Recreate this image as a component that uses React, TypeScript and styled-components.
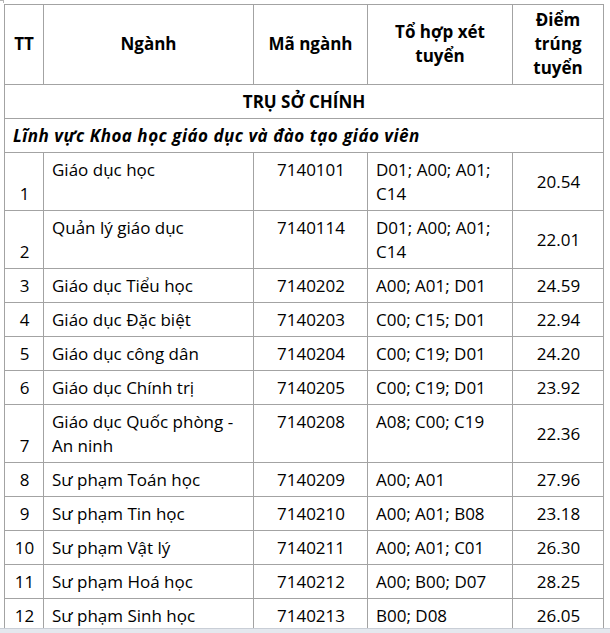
import React from "react";
import styled, { createGlobalStyle } from "styled-components";

const GlobalStyle = createGlobalStyle`
  html, body {
    margin: 0;
    padding: 0;
    background: #ffffff;
  }
  body {
    font-family: "Open Sans", "Noto Sans", "DejaVu Sans", sans-serif;
    color: #000000;
  }
`;

const Page = styled.div`
  position: relative;
  padding: 4px 0 0 4px;
  &::before {
    content: "";
    position: absolute;
    left: 0;
    top: 0;
    width: 3px;
    height: 2px;
    border-top: 1px solid #b5b5b5;
    border-right: 1px solid #b5b5b5;
  }
`;

const Table = styled.table`
  border-collapse: collapse;
  table-layout: fixed;
  width: 600px;
  font-size: 17px;
  line-height: 24px;
  border: 1px solid #a3a3a3;
`;

const HeadCell = styled.th`
  border: 1px solid #a3a3a3;
  padding: 3px 6px 4px 6px;
  font-weight: 700;
  text-align: center;
  vertical-align: middle;
`;

type CellProps = {
  $align?: "left" | "center";
  $valign?: "top" | "middle" | "bottom";
};

const Cell = styled.td<CellProps>`
  border: 1px solid #a3a3a3;
  padding: 5px 7px 4px 8px;
  text-align: ${(p) => p.$align ?? "left"};
  vertical-align: ${(p) => p.$valign ?? "top"};
`;

const CampusCell = styled.td`
  border: 1px solid #a3a3a3;
  padding: 5px 8px 4px 8px;
  text-align: center;
  font-weight: 700;
`;

const FieldCell = styled.td`
  border: 1px solid #a3a3a3;
  padding: 5px 8px 4px 8px;
  text-align: left;
  font-weight: 700;
  font-style: italic;
  letter-spacing: 0.5px;
`;

const BottomBand = styled.div`
  position: fixed;
  left: 0;
  right: 0;
  bottom: 0;
  height: 4px;
  background: #e4e8ee;
  border-top: 1px solid #c9ced6;
`;

type Row = {
  tt: string;
  name: string;
  code: string;
  combo: string;
  score: string;
};

const rows: Row[] = [
  { tt: "1", name: "Giáo dục học", code: "7140101", combo: "D01; A00; A01; C14", score: "20.54" },
  { tt: "2", name: "Quản lý giáo dục", code: "7140114", combo: "D01; A00; A01; C14", score: "22.01" },
  { tt: "3", name: "Giáo dục Tiểu học", code: "7140202", combo: "A00; A01; D01", score: "24.59" },
  { tt: "4", name: "Giáo dục Đặc biệt", code: "7140203", combo: "C00; C15; D01", score: "22.94" },
  { tt: "5", name: "Giáo dục công dân", code: "7140204", combo: "C00; C19; D01", score: "24.20" },
  { tt: "6", name: "Giáo dục Chính trị", code: "7140205", combo: "C00; C19; D01", score: "23.92" },
  { tt: "7", name: "Giáo dục Quốc phòng - An ninh", code: "7140208", combo: "A08; C00; C19", score: "22.36" },
  { tt: "8", name: "Sư phạm Toán học", code: "7140209", combo: "A00; A01", score: "27.96" },
  { tt: "9", name: "Sư phạm Tin học", code: "7140210", combo: "A00; A01; B08", score: "23.18" },
  { tt: "10", name: "Sư phạm Vật lý", code: "7140211", combo: "A00; A01; C01", score: "26.30" },
  { tt: "11", name: "Sư phạm Hoá học", code: "7140212", combo: "A00; B00; D07", score: "28.25" },
  { tt: "12", name: "Sư phạm Sinh học", code: "7140213", combo: "B00; D08", score: "26.05" },
];

export default function App() {
  return (
    <>
      <GlobalStyle />
      <Page>
        <Table>
          <colgroup>
            <col style={{ width: 39 }} />
            <col style={{ width: 210 }} />
            <col style={{ width: 114 }} />
            <col style={{ width: 145 }} />
            <col style={{ width: 91 }} />
          </colgroup>
          <thead>
            <tr>
              <HeadCell>TT</HeadCell>
              <HeadCell>Ngành</HeadCell>
              <HeadCell>Mã ngành</HeadCell>
              <HeadCell>Tổ hợp xét tuyển</HeadCell>
              <HeadCell>Điểm trúng tuyển</HeadCell>
            </tr>
          </thead>
          <tbody>
            <tr>
              <CampusCell colSpan={5}>TRỤ SỞ CHÍNH</CampusCell>
            </tr>
            <tr>
              <FieldCell colSpan={5}>Lĩnh vực Khoa học giáo dục và đào tạo giáo viên</FieldCell>
            </tr>
            {rows.map((r) => (
              <tr key={r.tt}>
                <Cell $align="center" $valign="bottom">{r.tt}</Cell>
                <Cell>{r.name}</Cell>
                <Cell $align="center">{r.code}</Cell>
                <Cell>{r.combo}</Cell>
                <Cell $align="center" $valign="middle">{r.score}</Cell>
              </tr>
            ))}
          </tbody>
        </Table>
      </Page>
      <BottomBand />
    </>
  );
}
